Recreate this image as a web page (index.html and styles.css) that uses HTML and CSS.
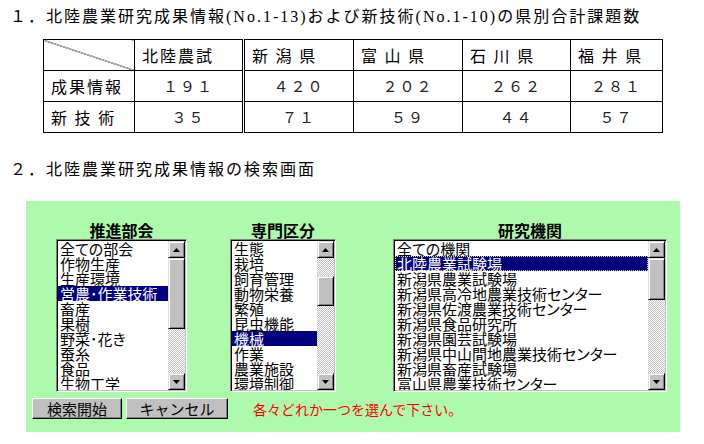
FILE: index.html
```html
<!DOCTYPE html>
<html lang="ja">
<head>
<meta charset="utf-8">
<title>北陸農業研究成果情報</title>
<link rel="stylesheet" href="styles.css">
</head>
<body>
<h1 class="title t1">１．北陸農業研究成果情報<span class="lat">(No.1-13)</span>および新技術<span class="lat">(No.1-10)</span>の県別合計課題数</h1>
<table class="sum">
<colgroup>
<col class="c1"><col class="c2"><col class="c3"><col class="c4"><col class="c5"><col class="c6">
</colgroup>
<tr><th class="diag"></th><th>北陸農試</th><th class="dbl">新 潟 県</th><th>富 山 県</th><th>石 川 県</th><th>福 井 県</th></tr>
<tr><th>成果情報</th><td>１９１</td><td class="dbl">４２０</td><td>２０２</td><td>２６２</td><td>２８１</td></tr>
<tr><th>新 技 術</th><td>３５</td><td class="dbl">７１</td><td>５９</td><td>４４</td><td>５７</td></tr>
</table>
<h2 class="title t2">２．北陸農業研究成果情報の検索画面</h2>
<div class="panel">
<div class="cols">
<div class="col w1">
<div class="lbl">推進部会</div>
<div class="lb">
<div class="items">
<div class="it">全ての部会</div>
<div class="it">作物生産</div>
<div class="it">生産環境</div>
<div class="it sel">営農･作業技術</div>
<div class="it">畜産</div>
<div class="it">果樹</div>
<div class="it">野菜･花き</div>
<div class="it">蚕糸</div>
<div class="it">食品</div>
<div class="it">生物工学</div>
</div>
<div class="sb">
<div class="arr"><svg width="7" height="4" viewBox="0 0 7 4"><path d="M3.5 0L7 4H0z" fill="#000"/></svg></div>
<div class="thumb h71"></div>
<div class="track"></div>
<div class="arr"><svg width="7" height="4" viewBox="0 0 7 4"><path d="M0 0H7L3.5 4z" fill="#000"/></svg></div>
</div>
</div>
</div>
<div class="col w2">
<div class="lbl">専門区分</div>
<div class="lb">
<div class="items">
<div class="it">生態</div>
<div class="it">栽培</div>
<div class="it">飼育管理</div>
<div class="it">動物栄養</div>
<div class="it">繁殖</div>
<div class="it">昆虫機能</div>
<div class="it sel">機械</div>
<div class="it">作業</div>
<div class="it">農業施設</div>
<div class="it">環境制御</div>
</div>
<div class="sb">
<div class="arr"><svg width="7" height="4" viewBox="0 0 7 4"><path d="M3.5 0L7 4H0z" fill="#000"/></svg></div>
<div class="track h18"></div>
<div class="thumb h30"></div>
<div class="track"></div>
<div class="arr"><svg width="7" height="4" viewBox="0 0 7 4"><path d="M0 0H7L3.5 4z" fill="#000"/></svg></div>
</div>
</div>
</div>
<div class="col w3">
<div class="lbl">研究機関</div>
<div class="lb">
<div class="items">
<div class="it">全ての機関</div>
<div class="it sel focus">北陸農業試験場</div>
<div class="it">新潟県農業試験場</div>
<div class="it">新潟県高冷地農業技術センター</div>
<div class="it">新潟県佐渡農業技術センター</div>
<div class="it">新潟県食品研究所</div>
<div class="it">新潟県園芸試験場</div>
<div class="it">新潟県中山間地農業技術センター</div>
<div class="it">新潟県畜産試験場</div>
<div class="it">富山県農業技術センター</div>
</div>
<div class="sb">
<div class="arr"><svg width="7" height="4" viewBox="0 0 7 4"><path d="M3.5 0L7 4H0z" fill="#000"/></svg></div>
<div class="thumb h42"></div>
<div class="track"></div>
<div class="arr"><svg width="7" height="4" viewBox="0 0 7 4"><path d="M0 0H7L3.5 4z" fill="#000"/></svg></div>
</div>
</div>
</div>
</div>
<div class="actions">
<button class="btn b1">検索開始</button>
<button class="btn b2">キャンセル</button>
<span class="msg">各々どれか一つを選んで下さい。</span>
</div>
</div>
</body>
</html>
```

FILE: styles.css
```css
body {
  margin: 0;
  background: #fff;
  color: #000;
  font-family: "Noto Sans CJK JP", sans-serif;
}
.title {
  margin: 0;
  padding-left: 10px;
  font-size: 16px;
  font-weight: normal;
  line-height: 20px;
  letter-spacing: 2px;
  font-family: "Liberation Serif", "Noto Sans CJK JP", serif;
}
.t1 { padding-top: 7px; }
.t2 { margin-top: 27px; }
.sum {
  margin: 12px 0 0 43px;
  border-collapse: collapse;
  table-layout: fixed;
  width: 619px;
  font-family: "Noto Sans CJK JP", sans-serif;
}
.c1 { width: 91px; }
.c2 { width: 109px; }
.c3 { width: 110px; }
.c4 { width: 109px; }
.c5 { width: 108px; }
.c6 { width: 92px; }
.sum th, .sum td {
  border: 1px solid #000;
  height: 30px;
  padding: 0;
  font-size: 16px;
  line-height: 20px;
  font-weight: normal;
  letter-spacing: 2px;
  vertical-align: middle;
}
.sum th {
  text-align: left;
  padding-left: 7px;
}
.sum td {
  text-align: center;
  font-size: 15px;
  color: #222;
}
.sum .dbl { border-left: 3px double #000; }
.sum .diag {
  background: linear-gradient(to top right, transparent calc(50% - 0.6px), #000 50%, transparent calc(50% + 0.6px));
}
.panel {
  margin: 21px 0 0 26px;
  width: 654px;
  height: 231px;
  background: #adfaad;
  padding-top: 20px;
  box-sizing: border-box;
}
.cols {
  display: flex;
  margin-left: 30px;
}
.col { display: flex; flex-direction: column; }
.w1 { width: 131px; margin-right: 43px; }
.w2 { width: 106px; margin-right: 57px; }
.w3 { width: 274px; }
.lbl {
  text-align: center;
  font-weight: bold;
  font-size: 16px;
  line-height: 18px;
  height: 18px;
}
.lb {
  height: 153px;
  box-sizing: border-box;
  border: 1px solid;
  border-color: #808080 #fff #fff #808080;
  padding: 1px;
  box-shadow: inset 1px 1px #000, inset -1px -1px #c0c0c0;
  background: #fff;
  display: flex;
}
.items {
  flex: 1;
  overflow: hidden;
  min-width: 0;
}
.it {
  font-size: 15px;
  line-height: 15px;
  height: 15px;
  letter-spacing: 0;
  font-feature-settings: "palt";
  white-space: nowrap;
  padding-left: 2px;
}
.sel {
  background: #000080;
  color: #fff;
}
.focus { outline: 1px dotted #d8d870; outline-offset: -1px; }
.sb {
  width: 17px;
  display: flex;
  flex-direction: column;
}
.arr, .thumb {
  box-sizing: border-box;
  background: #c0c0c0;
  border: 1px solid;
  border-color: #dfdfdf #000 #000 #dfdfdf;
  box-shadow: inset 1px 1px #fff, inset -1px -1px #808080;
}
.arr {
  height: 17px;
  display: flex;
  align-items: center;
  justify-content: center;
}
.thumb.h71 { height: 71px; }
.thumb.h30 { height: 30px; }
.thumb.h42 { height: 42px; }
.track {
  flex: 1;
  background: repeating-conic-gradient(#fff 0 25%, #c0c0c0 0 50%) 0 0 / 2px 2px;
}
.track.h18 { flex: none; height: 18px; }
.actions {
  display: flex;
  align-items: center;
  margin: 6px 0 0 6px;
}
.btn {
  height: 21px;
  box-sizing: border-box;
  background: #c0c0c0;
  border: 1px solid;
  border-color: #fff #000 #000 #fff;
  box-shadow: inset -1px -1px #808080;
  font-family: "Noto Sans CJK JP", sans-serif;
  font-size: 15px;
  line-height: 17px;
  padding: 0;
  color: #000;
}
.b1 { width: 90px; margin-right: 4px; }
.b2 { width: 102px; margin-right: 25px; }
.msg {
  color: #ff0000;
  font-size: 14px;
  letter-spacing: 0;
}
```
